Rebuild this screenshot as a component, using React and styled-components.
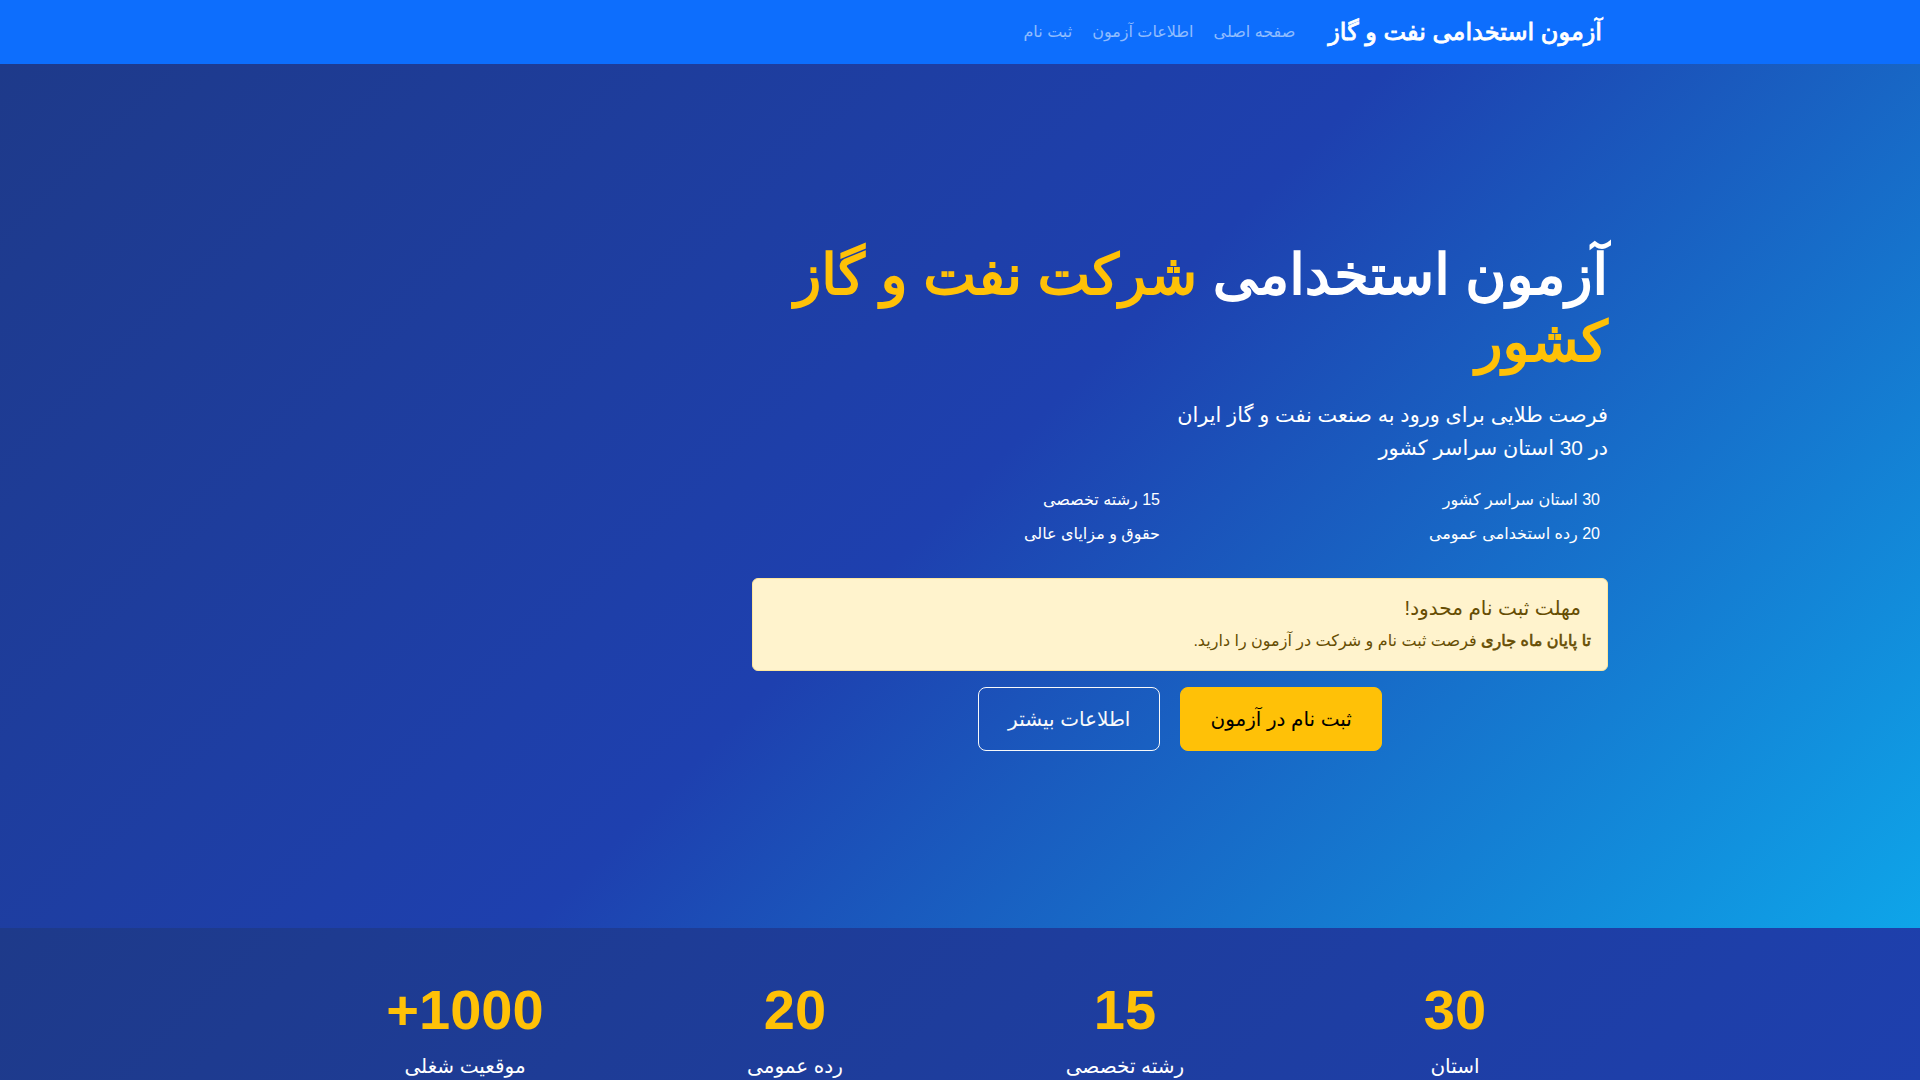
import React from 'react'
import styled, { createGlobalStyle, css } from 'styled-components'

// the Persian glyphs come out in DejaVu Sans with a synthetic bold,
// so bold text is drawn as regular weight with a thin outline
const fakeBold = width => css`
  font-weight: 400;
  -webkit-text-stroke: ${width}px;
`

const GlobalStyle = createGlobalStyle`
  * {
    box-sizing: border-box;
  }

  body {
    margin: 0;
    direction: rtl;
    font-family: "Liberation Sans", "DejaVu Sans", sans-serif;
    font-size: 16px;
    line-height: 1.5;
    color: #212529;
    background: #fff;
  }
`

const Container = styled.div`
  width: 100%;
  max-width: 1320px;
  margin: 0 auto;
  padding: 0 12px;
`

const Navbar = styled.nav`
  height: 64px;
  display: flex;
  align-items: center;
  background-color: #0d6efd;
`

const NavInner = styled(Container)`
  display: flex;
  align-items: center;
`

const Brand = styled.a`
  margin-left: 23px;
  padding-right: 6px;
  font-size: 24px;
  ${fakeBold(0.86)}
  line-height: 1.5;
  color: #fff;
  text-decoration: none;
`

const NavList = styled.ul`
  margin: 0;
  padding: 0;
  display: flex;
  list-style: none;
`

const NavLink = styled.a`
  display: block;
  padding: 8px 10px;
  font-size: 16px;
  color: rgba(255, 255, 255, 0.55);
  text-decoration: none;
`

const Hero = styled.section`
  min-height: 80vh;
  display: flex;
  align-items: center;
  background: linear-gradient(135deg, #1e3a8a 0%, #1e40af 50%, #0ea5e9 100%);
  color: #fff;
`

const HeroCol = styled.div`
  max-width: 856px;
`

const Title = styled.h1`
  margin: 0 0 24px;
  font-size: 56px;
  ${fakeBold(1.75)}
  line-height: 1.2;

  span {
    color: #ffc107;
  }
`

const Lead = styled.p`
  margin: 0 0 24px;
  font-size: 20.8px;
  line-height: 1.55;
`

const Features = styled.ul`
  margin: 0 0 32px;
  padding: 0;
  list-style: none;
  display: grid;
  grid-template-columns: 1fr 1fr;
  column-gap: 24px;
  row-gap: 10px;
`

const Feature = styled.li`
  padding-right: 8px;
  font-size: 16px;
  line-height: 24px;
`

const Alert = styled.div`
  margin-bottom: 16px;
  padding: 17px 16px;
  border: 1px solid #ffe69c;
  border-radius: 6px;
  background-color: #fff3cd;
  color: #664d03;

  strong {
    ${fakeBold(0.62)}
  }
`

const AlertHeading = styled.h5`
  margin: 0 0 9px;
  padding-right: 10px;
  font-size: 20px;
  font-weight: 400;
  line-height: 1.2;
`

const AlertText = styled.p`
  margin: 0;
  font-size: 16px;
`

const Actions = styled.div`
  display: flex;
  justify-content: center;
  gap: 20px;
`

const Button = styled.a`
  display: inline-block;
  padding: 16px 29px;
  border: 1px solid ${props => (props.outline ? '#f8f9fa' : '#ffc107')};
  border-radius: 8px;
  background-color: ${props => (props.outline ? 'transparent' : '#ffc107')};
  font-size: 20px;
  line-height: 1.5;
  color: ${props => (props.outline ? '#f8f9fa' : '#000')};
  text-decoration: none;
`

const Stats = styled.section`
  padding: 48px 0;
  background: linear-gradient(135deg, #1e3a8a 0%, #1e40af 100%);
  color: #fff;
`

const StatsGrid = styled.div`
  display: grid;
  grid-template-columns: repeat(4, 1fr);
  margin: 0 -12px;
`

const Stat = styled.div`
  padding: 0 12px;
  text-align: center;
`

const StatNumber = styled.div`
  margin-bottom: 8px;
  font-size: 56px;
  font-weight: 700;
  line-height: 1.2;
  color: #ffc107;
`

const StatLabel = styled.div`
  font-size: 20px;
`

const stats = [
  { value: '30', label: 'استان' },
  { value: '15', label: 'رشته تخصصی' },
  { value: '20', label: 'رده عمومی' },
  { value: '1000+', label: 'موقعیت شغلی' },
]

function App() {
  return (
    <>
      <GlobalStyle />
      <Navbar>
        <NavInner>
          <Brand href='#'>آزمون استخدامی نفت و گاز</Brand>
          <NavList>
            <li><NavLink href='#'>صفحه اصلی</NavLink></li>
            <li><NavLink href='#'>اطلاعات آزمون</NavLink></li>
            <li><NavLink href='#'>ثبت نام</NavLink></li>
          </NavList>
        </NavInner>
      </Navbar>

      <Hero>
        <Container>
          <HeroCol>
            <Title>
              آزمون استخدامی <span>شرکت نفت و گاز کشور</span>
            </Title>
            <Lead>
              فرصت طلایی برای ورود به صنعت نفت و گاز ایران
              <br />
              در 30 استان سراسر کشور
            </Lead>
            <Features>
              <Feature>30 استان سراسر کشور</Feature>
              <Feature>15 رشته تخصصی</Feature>
              <Feature>20 رده استخدامی عمومی</Feature>
              <Feature>حقوق و مزایای عالی</Feature>
            </Features>
            <Alert>
              <AlertHeading>مهلت ثبت نام محدود!</AlertHeading>
              <AlertText>
                <strong>تا پایان ماه جاری</strong> فرصت ثبت نام و شرکت در آزمون را دارید.
              </AlertText>
            </Alert>
            <Actions>
              <Button href='#'>ثبت نام در آزمون</Button>
              <Button href='#' outline>اطلاعات بیشتر</Button>
            </Actions>
          </HeroCol>
        </Container>
      </Hero>

      <Stats>
        <Container>
          <StatsGrid>
            {stats.map(s => (
              <Stat key={s.label}>
                <StatNumber>{s.value}</StatNumber>
                <StatLabel>{s.label}</StatLabel>
              </Stat>
            ))}
          </StatsGrid>
        </Container>
      </Stats>
    </>
  )
}

export default App
